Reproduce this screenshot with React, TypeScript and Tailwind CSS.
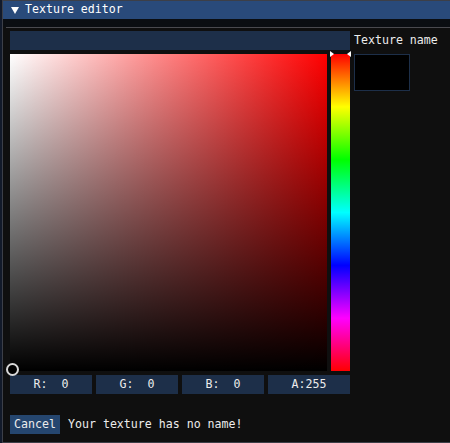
const mono = "font-['DejaVu_Sans_Mono','Liberation_Mono',monospace] text-[11.6px] leading-none";

function ChannelBox({ label }: { label: string }) {
  return (
    <div className="flex h-[19px] w-[82px] items-center justify-center whitespace-pre bg-[#1d2f49] text-[#ececec]">
      {label}
    </div>
  );
}

export default function App() {
  return (
    <div className={`flex h-[443px] w-[450px] bg-[#121a2a] ${mono}`}>
      <div className="ml-[2px] flex flex-1 flex-col border-l border-t border-b border-[#3c3f48] bg-[#0f0f0f]">
        {/* title bar */}
        <div className="flex h-[18px] items-center bg-[#294a7a] pl-[8px] text-white">
          <div className="h-0 w-0 border-x-[4px] border-t-[7px] border-x-transparent border-t-white" />
          <span className="ml-[6px]">Texture editor</span>
        </div>
        <div className="h-[8px] bg-[#0b0e12]" />
        <div className="ml-[3px] h-px bg-[#4a4a4f]" />

        <div className="flex flex-col gap-[4px] pl-[7px] pt-[3px]">
          <div className="flex items-center gap-[4px]">
            <div className="h-[19px] w-[340px] bg-[#1d2f49]" />
            <span className="text-[#ececec]">Texture name</span>
          </div>

          <div className="flex gap-[4px]">
            <div className="flex w-[340px] flex-col gap-[4px]">
              <div className="flex gap-[4px]">
                <div className="relative h-[317px] w-[317px] bg-[linear-gradient(to_right,#ffffff,#ff0000)]">
                  <div className="absolute inset-0 bg-[linear-gradient(to_top,#000000,rgba(0,0,0,0))]" />
                  <div className="absolute left-[-4px] top-[309px] h-[13px] w-[13px] rounded-full border-2 border-[#d8d8d8] bg-black" />
                </div>
                <div className="relative h-[317px] w-[19px] bg-[linear-gradient(to_bottom,#ff0000,#ffff00,#00ff00,#00ffff,#0000ff,#ff00ff,#ff0000)]">
                  <div className="absolute left-[-1px] top-[-3px] h-0 w-0 border-y-[3px] border-l-[4px] border-y-transparent border-l-white" />
                  <div className="absolute right-[-1px] top-[-3px] h-0 w-0 border-y-[3px] border-r-[4px] border-y-transparent border-r-white" />
                </div>
              </div>
              <div className="flex gap-[4px]">
                <ChannelBox label="R:  0" />
                <ChannelBox label="G:  0" />
                <ChannelBox label="B:  0" />
                <ChannelBox label="A:255" />
              </div>
            </div>
            <div className="h-[37px] w-[56px] border border-[#1d2f49] bg-black" />
          </div>

          <div className="mt-[17px] flex items-center gap-[8px]">
            <div className="flex h-[19px] w-[50px] items-center justify-center bg-[#25466f] text-[#ececec]">
              Cancel
            </div>
            <span className="text-[#ececec]">Your texture has no name!</span>
          </div>
        </div>
      </div>
    </div>
  );
}
